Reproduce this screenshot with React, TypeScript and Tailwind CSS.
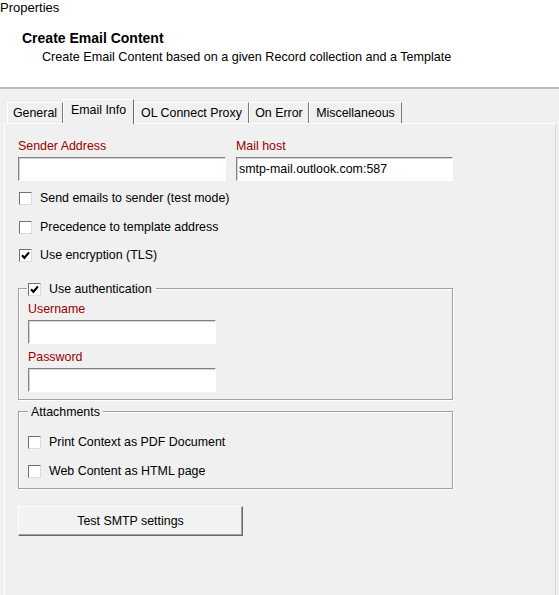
const Check = ({ checked = false }: { checked?: boolean }) => (
  <span className="flex h-[13px] w-[13px] shrink-0 items-center justify-center border border-t-[#707070] border-l-[#707070] border-r-[#dcdcdc] border-b-[#dcdcdc] bg-white">
    {checked && (
      <svg width="9" height="9" viewBox="0 0 9 9">
        <path d="M1 4.2 L3.4 6.8 L8 1.4" fill="none" stroke="#000" strokeWidth="2.1" />
      </svg>
    )}
  </span>
);

const CheckRow = ({ label, checked = false, className = "" }: { label: string; checked?: boolean; className?: string }) => (
  <div className={`flex h-[16px] items-center gap-[8px] ${className}`}>
    <Check checked={checked} />
    <span>{label}</span>
  </div>
);

const Field = ({ value = "", className = "" }: { value?: string; className?: string }) => (
  <div
    className={`flex h-[24px] items-center border border-t-[#828282] border-l-[#828282] border-r-white border-b-white bg-white pl-[2px] shadow-[inset_1px_1px_0_#d4d4d4] ${className}`}
  >
    {value}
  </div>
);

const Label = ({ text }: { text: string }) => <div className="h-[16px] leading-[16px] text-[#990000]">{text}</div>;

const tabs = [
  { name: "General", w: "w-[56px]" },
  { name: "Email Info", w: "w-[71px]", active: true },
  { name: "OL Connect Proxy", w: "w-[115px]" },
  { name: "On Error", w: "w-[60px]" },
  { name: "Miscellaneous", w: "w-[93px]" },
];

export default function App() {
  return (
    <div className="h-[595px] w-[559px] overflow-hidden bg-[#f0f0f0] text-[12.4px] leading-[16px] text-black [font-family:'Liberation_Sans',Arial,sans-serif]">
      {/* header */}
      <div className="h-[89px] border-b-2 border-[#bcbcbc] bg-white">
        <div className="h-[16px] text-[13px]">Properties</div>
        <div className="ml-[22px] mt-[14px] text-[14px] font-bold">Create Email Content</div>
        <div className="ml-[42px] mt-[3px] text-[12.6px]">Create Email Content based on a given Record collection and a Template</div>
      </div>

      {/* tab strip */}
      <div className="mt-[10px] flex items-end pl-[7px]">
        {tabs.map((t) =>
          t.active ? (
            <div
              key={t.name}
              className={`${t.w} relative z-10 -mb-px flex h-[25px] items-start justify-center border-l border-t border-r border-l-white border-t-white border-r-[#696969] bg-[#f0f0f0] pt-[2px]`}
            >
              {t.name}
            </div>
          ) : (
            <div
              key={t.name}
              className={`${t.w} flex h-[21px] items-center justify-center border-l border-t border-r border-l-white border-t-white border-r-[#7a7a7a]`}
            >
              {t.name}
            </div>
          )
        )}
      </div>

      {/* panel */}
      <div className="ml-[4px] h-[480px] w-[552px] border-l border-t border-r border-l-white border-t-white border-r-[#d8d8d8] pl-[13px] pt-[14px]">
        <div className="flex gap-[10px]">
          <div className="w-[208px]">
            <Label text="Sender Address" />
            <Field className="mt-[3px]" />
          </div>
          <div className="w-[217px]">
            <Label text="Mail host" />
            <Field className="mt-[3px]" value="smtp-mail.outlook.com:587" />
          </div>
        </div>

        <div className="pl-[1px]">
          <CheckRow className="mt-[9px]" label="Send emails to sender (test mode)" />
          <CheckRow className="mt-[13px]" label="Precedence to template address" />
          <CheckRow className="mt-[12px]" label="Use encryption (TLS)" checked />
        </div>

        {/* authentication group */}
        <div className="relative mt-[25px] h-[112px] w-[435px] border border-[#a0a0a0] pl-[9px] pt-[12px] shadow-[inset_1px_1px_0_#fff,1px_1px_0_#fff]">
          <div className="absolute -top-[8px] left-[8px] flex h-[16px] items-center gap-[8px] bg-[#f0f0f0] pl-[1px] pr-[4px]">
            <Check checked />
            <span>Use authentication</span>
          </div>
          <Label text="Username" />
          <Field className="mt-[3px] h-[23px] w-[188px]" />
          <div className="mt-[5px]">
            <Label text="Password" />
          </div>
          <Field className="mt-[3px] h-[23px] w-[188px]" />
        </div>

        {/* attachments group */}
        <div className="relative mt-[11px] h-[78px] w-[435px] border border-[#a0a0a0] pl-[9px] pt-[22px] shadow-[inset_1px_1px_0_#fff,1px_1px_0_#fff]">
          <div className="absolute -top-[8px] left-[9px] h-[16px] bg-[#f0f0f0] px-[3px]">Attachments</div>
          <CheckRow label="Print Context as PDF Document" />
          <CheckRow className="mt-[13px]" label="Web Content as HTML page" />
        </div>

        <button className="mt-[17px] flex h-[30px] w-[225px] items-center justify-center border border-l-white border-t-white border-r-[#696969] border-b-[#696969] bg-[#f2f2f2] shadow-[inset_-1px_-1px_0_#a0a0a0]">
          Test SMTP settings
        </button>
      </div>
    </div>
  );
}
